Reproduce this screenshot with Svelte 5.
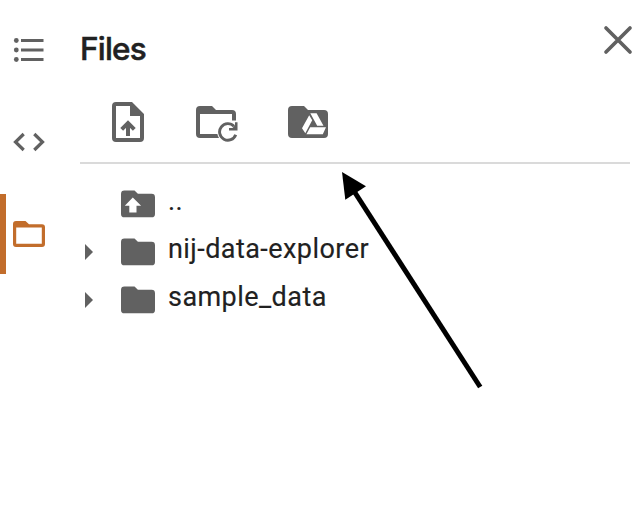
<script>
  const entries = [
    { name: '..', kind: 'parent' },
    { name: 'nij-data-explorer', kind: 'folder' },
    { name: 'sample_data', kind: 'folder' }
  ];
</script>

<div class="app">
  <nav>
    <button class="tab" aria-label="Table of contents">
      <svg width="46" height="40" viewBox="0 0 46 40">
        <g fill="#616161">
          <circle cx="16.3" cy="10.5" r="2.4" /><circle cx="16.3" cy="20" r="2.4" /><circle cx="16.3" cy="29.5" r="2.4" />
          <path d="M21 9h22.5v3H21zM21 18.5h22.5v3H21zM21 28h22.5v3H21z" />
        </g>
      </svg>
    </button>
    <button class="tab" aria-label="Code snippets">
      <svg width="46" height="40" viewBox="0 0 46 40">
        <path d="M23.7 12L15.5 20l8.2 8M34.3 12l8.2 8-8.2 8" fill="none" stroke="#616161" stroke-width="3.2" />
      </svg>
    </button>
    <button class="tab active" aria-label="Files">
      <svg width="46" height="40" viewBox="0 0 46 40">
        <path fill="#c26d2b" fill-rule="evenodd" d="M16 7h9.5l3.5 3.3h13a3 3 0 0 1 3 3V30a3 3 0 0 1-3 3H16a3 3 0 0 1-3-3V10a3 3 0 0 1 3-3zM16.2 13.5v16.2h25.6V13.5z" />
      </svg>
    </button>
  </nav>

  <main>
    <header>
      <h1>Files</h1>
      <button class="close" aria-label="Close">
        <svg width="32" height="32" viewBox="0 0 32 32">
          <path d="M4 4l24 24M28 4L4 28" stroke="#616161" stroke-width="3.7" stroke-linecap="round" />
        </svg>
      </button>
    </header>

    <div class="toolbar">
      <button aria-label="Upload">
        <svg width="32" height="40" viewBox="0 0 32 40">
          <path fill="#616161" fill-rule="evenodd" d="M4 0h16l12 12v24a4 4 0 0 1-4 4H4a4 4 0 0 1-4-4V4a4 4 0 0 1 4-4zM4 4v32h24V14H18V4z" />
          <path d="M16 34V22M9.700 27.300L16 21l6.300 6.300" fill="none" stroke="#616161" stroke-width="4" />
        </svg>
      </button>
      <button aria-label="Refresh">
        <svg width="44" height="40" viewBox="0 0 44 40">
          <path fill="#616161" fill-rule="evenodd" d="M4 4h12l4 4h16a4 4 0 0 1 4 4v20a4 4 0 0 1-4 4H4a4 4 0 0 1-4-4V8a4 4 0 0 1 4-4zM4 12v20h32V12z" />
          <circle cx="31.8" cy="30" r="10.6" fill="#fff" />
          <path fill="#fff" d="M35 18.500h9V36h-9z" />
          <path d="M38 24.300A8.300 8.300 0 1 0 39.700 32.700" fill="none" stroke="#616161" stroke-width="2.900" />
          <path fill="#616161" d="M41.500 20.300v8.200h-8.500v-2.600h3.500l2.500-2.600v-3z" />
        </svg>
      </button>
      <button aria-label="Mount Drive">
        <svg width="40" height="40" viewBox="0 0 40 40">
          <path fill="#616161" d="M4 4h12l4 4h16a4 4 0 0 1 4 4v20a4 4 0 0 1-4 4H4a4 4 0 0 1-4-4V8a4 4 0 0 1 4-4z" />
          <path fill="#fff" d="M21.200 13.200L24.200 18.200 17.300 31.200 14 26.200zM22.300 11.300h6.300L35.500 23.700H29.200zM22.200 25.200H38L34.800 32.300H18.400z" />
        </svg>
      </button>
    </div>

    <ul>
      {#each entries as entry}
        <li>
          <span class="caret">
            {#if entry.kind === 'folder'}
              <svg width="8" height="16" viewBox="0 0 8 16"><path fill="#616161" d="M0 0l8 8-8 8z" /></svg>
            {/if}
          </span>
          <svg width="34" height="28" viewBox="0 0 34 28">
            <path fill="#616161" d="M3.400.5H13.500l3.400 3.300h13.700a3.400 3.400 0 0 1 3.400 3.400v16.700a3.400 3.400 0 0 1-3.400 3.400H3.400A3.400 3.400 0 0 1 0 23.900V3.900A3.400 3.400 0 0 1 3.400.5z" />
            {#if entry.kind === 'parent'}
              <path fill="#fff" d="M11.800 7.500l8.300 8.300h-4.600v6.700H8.300v-6.700H3.800z" />
            {/if}
          </svg>
          <span class="name">{entry.name}</span>
        </li>
      {/each}
    </ul>
  </main>

  <svg class="pointer" width="160" height="230" viewBox="330 165 160 230">
    <path d="M480.200 387L352 188" stroke="#000" stroke-width="5" />
    <path d="M342 172l24 14.300L345.300 199.700z" />
  </svg>
</div>

<style>
  :global(body) { background: #fff; }
  .app {
    position: relative;
    display: flex;
    width: 636px;
    height: 508px;
    overflow: hidden;
    background: #fff;
    color: #212121;
    font-family: Roboto, "Liberation Sans", sans-serif;
  }
  button { padding: 0; border: 0; background: none; display: flex; }
  svg { display: block; flex: none; }
  nav {
    width: 80px;
    flex: none;
    display: flex;
    flex-direction: column;
    gap: 12px;
    padding-top: 10px;
    box-sizing: border-box;
  }
  .tab { height: 80px; align-items: center; border-left: 0 solid #c26d2b; }
  .active { border-left-width: 6px; }
  .active svg { margin-left: -6px; }
  main { flex: 1; min-width: 0; }
  header {
    height: 98px;
    display: flex;
    justify-content: space-between;
    align-items: flex-start;
    padding-right: 2px;
  }
  h1 {
    margin: 29px 0 0;
    font: 500 31.5px/40px Inter, Roboto, sans-serif;
    letter-spacing: -0.8px;
    -webkit-text-stroke: 0.5px #212121;
  }
  .close { margin-top: 24px; }
  .toolbar {
    display: flex;
    height: 64px;
    width: 550px;
    border-bottom: 2px solid #dadada;
    align-items: flex-start;
  }
  .toolbar button { margin-top: 4px; }
  .toolbar button:nth-child(1) { margin-left: 32px; }
  .toolbar button:nth-child(2) { margin-left: 52px; }
  .toolbar button:nth-child(3) { margin-left: 48px; }
  ul { list-style: none; margin: 16px 0 0; padding: 0; }
  li { height: 48px; display: flex; align-items: center; }
  .caret { width: 36px; padding-left: 5px; }
  .name {
    margin: -6px 0 0 13px;
    font-size: 27px;
    line-height: 40px;
    letter-spacing: 0.44px;
    -webkit-text-stroke: 0.15px #212121;
  }
  .pointer { position: absolute; left: 330px; top: 165px; pointer-events: none; }
</style>
